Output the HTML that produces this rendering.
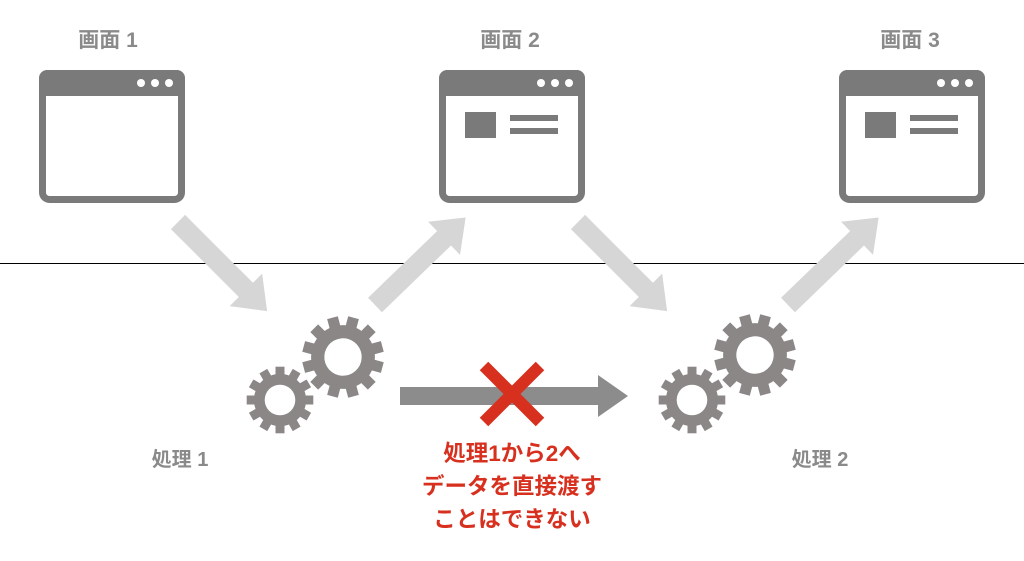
<!DOCTYPE html>
<html><head><meta charset="utf-8"><style>
body{margin:0;width:1024px;height:561px;background:#fff;overflow:hidden;position:relative;font-family:"Liberation Sans","Noto Sans CJK JP",sans-serif;font-weight:bold}
.t{position:absolute;color:#8a8a8a;font-size:21px;transform:translateX(-50%);white-space:nowrap}
.r{position:absolute;color:#d7301f;font-size:22.5px;left:512px;transform:translateX(-50%);white-space:nowrap}
svg{position:absolute;left:0;top:0}
</style></head><body>
<svg width="1024" height="561">
<defs>
<g id="win">
<rect x="3.5" y="3.5" width="139" height="126" rx="7" fill="none" stroke="#7a7a7a" stroke-width="7"/>
<rect x="0" y="0" width="146" height="26" rx="8" fill="#7a7a7a"/>
<circle cx="102" cy="13" r="4" fill="#fff"/><circle cx="116" cy="13" r="4" fill="#fff"/><circle cx="130" cy="13" r="4" fill="#fff"/>
</g>
<g id="cont">
<rect x="26" y="42" width="31" height="26" fill="#7a7a7a"/>
<rect x="71" y="45" width="48" height="6" fill="#7a7a7a"/>
<rect x="71" y="58" width="48" height="6" fill="#7a7a7a"/>
</g>
<g id="arr"><path d="M0,-10 L96,-10 L96,-23 L126,0 L96,23 L96,10 L0,10Z" fill="#d6d6d6"/></g>
<g id="gear" fill="#8b8787">
<circle r="29"/>
<g><rect x="-5" y="-37" width="10" height="74"/><rect x="-5" y="-37" width="10" height="74" transform="rotate(30)"/><rect x="-5" y="-37" width="10" height="74" transform="rotate(60)"/><rect x="-5" y="-37" width="10" height="74" transform="rotate(90)"/><rect x="-5" y="-37" width="10" height="74" transform="rotate(120)"/><rect x="-5" y="-37" width="10" height="74" transform="rotate(150)"/></g>
<circle r="17" fill="#fff"/>
</g>
</defs>
<line x1="0" y1="263.5" x2="1024" y2="263.5" stroke="#000" stroke-width="1"/>
<use href="#win" x="39" y="70"/>
<use href="#win" x="439" y="70"/><use href="#cont" x="439" y="70"/>
<use href="#win" x="839" y="70"/><use href="#cont" x="839" y="70"/>
<use href="#arr" transform="translate(178,222) rotate(45)"/>
<use href="#arr" transform="translate(375,305) rotate(-44)"/>
<use href="#arr" transform="translate(578,222) rotate(45)"/>
<use href="#arr" transform="translate(788,305) rotate(-44)"/>
<use href="#gear" transform="translate(280,400) scale(0.9)"/>
<use href="#gear" transform="translate(343,357) scale(1.1) rotate(15)"/>
<use href="#gear" transform="translate(692,400) scale(0.9)"/>
<use href="#gear" transform="translate(755,355) scale(1.1) rotate(15)"/>
<path d="M400,387 L598,387 L598,375 L628,396 L598,417 L598,405 L400,405Z" fill="#8c8c8c"/>
<g stroke="#d7301f" stroke-width="12"><line x1="484" y1="366" x2="540" y2="422"/><line x1="540" y1="366" x2="484" y2="422"/></g>
</svg>
<div class="t" style="left:108px;top:24px">画面 1</div>
<div class="t" style="left:510px;top:24px">画面 2</div>
<div class="t" style="left:910px;top:24px">画面 3</div>
<div class="t" style="left:180px;top:443px;font-size:20px">処理 1</div>
<div class="t" style="left:820px;top:443px;font-size:20px">処理 2</div>
<div class="r" style="top:436px">処理1から2へ</div>
<div class="r" style="top:469px">データを直接渡す</div>
<div class="r" style="top:502px">ことはできない</div>
</body></html>
